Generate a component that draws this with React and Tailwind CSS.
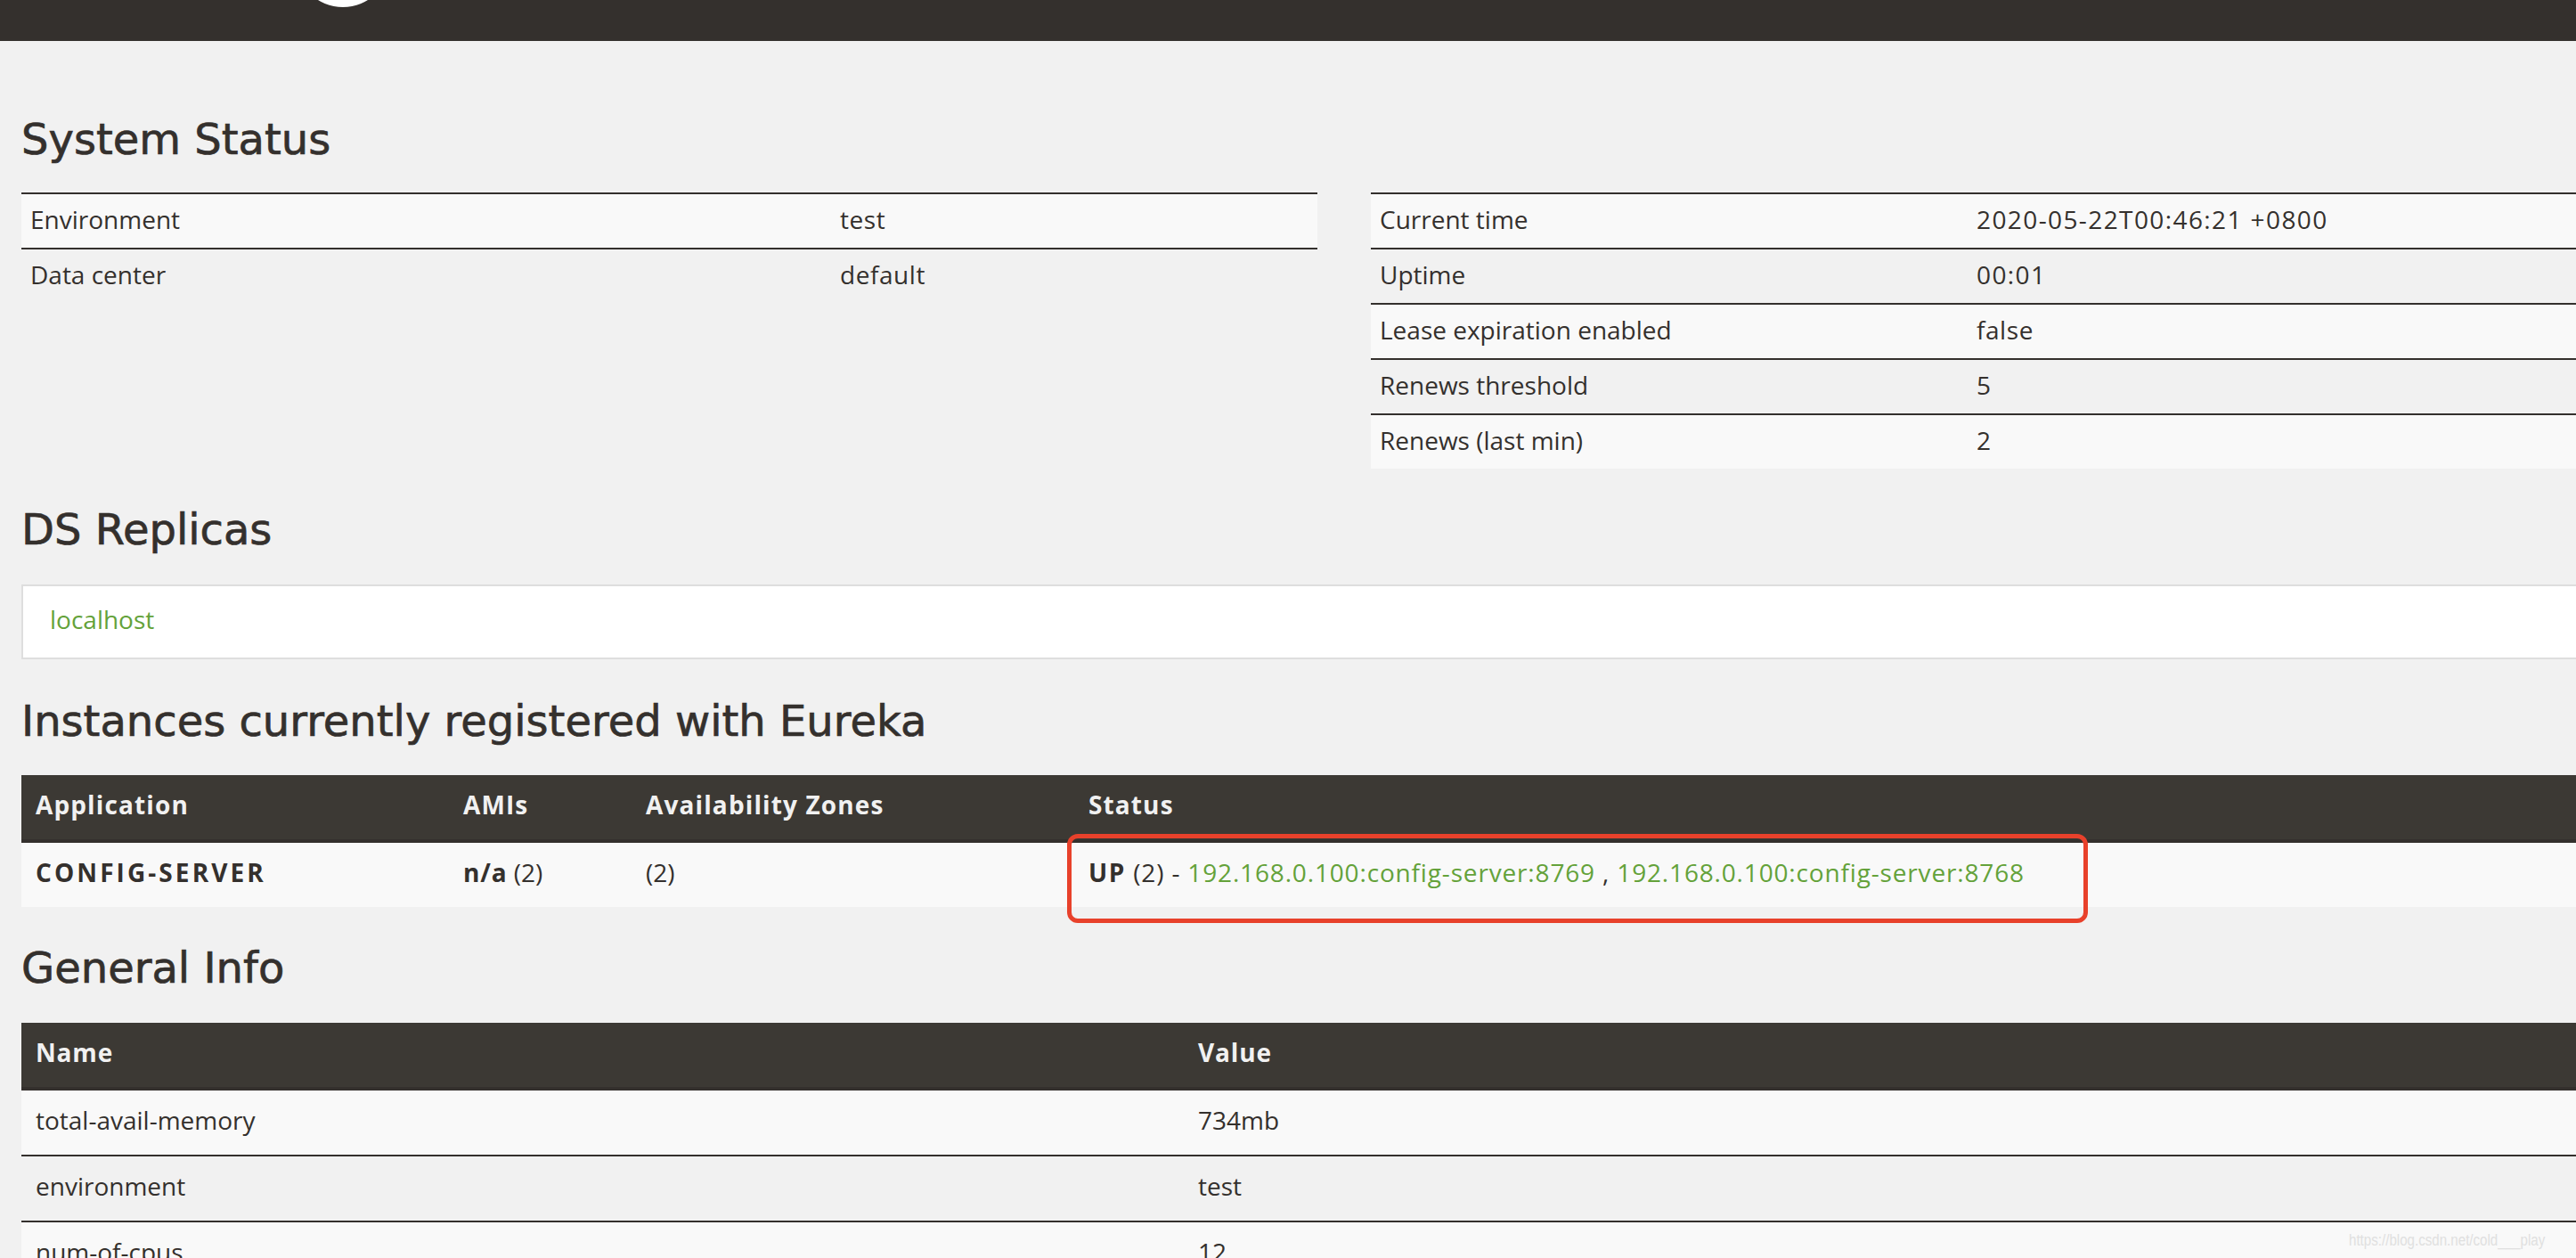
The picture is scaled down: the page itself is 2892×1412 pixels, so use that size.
const systemLeft = [
  ["Environment", "test"],
  ["Data center", "default"],
];

const systemRight = [
  ["Current time", "2020-05-22T00:46:21 +0800"],
  ["Uptime", "00:01"],
  ["Lease expiration enabled", "false"],
  ["Renews threshold", "5"],
  ["Renews (last min)", "2"],
];

const general = [
  ["total-avail-memory", "734mb"],
  ["environment", "test"],
  ["num-of-cpus", "12"],
];

function Heading({ children, className }) {
  return (
    <h2
      className={
        "font-['DejaVu_Sans',sans-serif] text-[48px] leading-[52px] text-[#34302d] [-webkit-text-stroke:0.7px_#34302d] " +
        className
      }
    >
      {children}
    </h2>
  );
}

function StatusTable({ rows, labelWidth }) {
  return (
    <div className="w-[1455px]">
      {rows.map(([label, value], i) => (
        <div
          key={label}
          className={
            "flex h-[62px] border-t-2 border-[#34302d] " +
            (i % 2 === 0 ? "bg-[#f9f9f9]" : "")
          }
        >
          <div className="px-[10px] pt-[8px]" style={{ width: labelWidth }}>
            {label}
          </div>
          <div
            className={
              "px-[10px] pt-[8px] " +
              (/\d/.test(value) ? "tracking-[0.05em]" : "tracking-[0.02em]")
            }
          >
            {value}
          </div>
        </div>
      ))}
    </div>
  );
}

export default function App() {
  return (
    <div className="relative w-[2892px] h-[1412px] overflow-hidden bg-[#f1f1f1] text-[#34302d] font-['Open_Sans',sans-serif] font-medium text-[28px] leading-[40px]">
      <nav className="relative h-[46px] bg-[#34302d] overflow-hidden">
        <div className="absolute left-[332px] top-[-98px] w-[106px] h-[106px] rounded-full bg-white" />
      </nav>

      <main className="w-[3018px] px-[24px]">
        <Heading className="mt-[84px] mb-[34px]">System Status</Heading>
        <div className="flex gap-[60px]">
          <StatusTable rows={systemLeft} labelWidth={909} />
          <StatusTable rows={systemRight} labelWidth={670} />
        </div>

        <Heading className="mt-[42px] mb-[36px]">DS Replicas</Heading>
        <div className="h-[84px] border-2 border-[#dedede] bg-white px-[30px] pt-[17px]">
          <a className="text-[#64a23a]">localhost</a>
        </div>

        <Heading className="mt-[43px] mb-[35px]">
          Instances currently registered with Eureka
        </Heading>
        <div className="w-[2970px]">
          <div className="flex h-[76px] bg-[#3c3934] border-b-4 border-[#34302d] text-[#f1f1f1] font-bold tracking-[0.04em]">
            <div className="w-[480px] px-[16px] pt-[13px]">Application</div>
            <div className="w-[205px] px-[16px] pt-[13px]">AMIs</div>
            <div className="w-[497px] px-[16px] pt-[13px]">Availability Zones</div>
            <div className="px-[16px] pt-[13px]">Status</div>
          </div>
          <div className="flex h-[72px] bg-[#f9f9f9]">
            <div className="w-[480px] px-[16px] pt-[13px] font-bold tracking-[0.11em]">
              CONFIG-SERVER
            </div>
            <div className="w-[205px] px-[16px] pt-[13px]">
              <b className="tracking-[0.03em]">n/a</b> (2)
            </div>
            <div className="w-[497px] px-[16px] pt-[13px]">(2)</div>
            <div className="relative px-[16px] pt-[13px] tracking-[0.03em]">
              <b className="tracking-[0.06em]">UP</b> (2) -{" "}
              <a className="text-[#64a23a]">192.168.0.100:config-server:8769</a> ,{" "}
              <a className="text-[#64a23a]">192.168.0.100:config-server:8768</a>
              <div className="absolute left-[-8px] top-[-10px] w-[1146px] h-[100px] rounded-[12px] border-[5px] border-[#e8412b]" />
            </div>
          </div>
        </div>

        <Heading className="mt-[42px] mb-[36px]">General Info</Heading>
        <div className="w-[2970px]">
          <div className="flex h-[76px] bg-[#3c3934] border-b-4 border-[#34302d] text-[#f1f1f1] font-bold tracking-[0.03em]">
            <div className="w-[1305px] px-[16px] pt-[13px]">Name</div>
            <div className="px-[16px] pt-[13px]">Value</div>
          </div>
          {general.map(([name, value], i) => (
            <div
              key={name}
              className={
                "flex " +
                (i === 0 ? "h-[72px] " : "h-[74px] border-t-2 border-[#34302d] ") +
                (i % 2 === 0 ? "bg-[#f9f9f9]" : "")
              }
            >
              <div className="w-[1305px] px-[16px] pt-[13px]">{name}</div>
              <div className="px-[16px] pt-[13px]">{value}</div>
            </div>
          ))}
        </div>
      </main>

      <div className="absolute left-[2637px] top-[1380px] origin-left scale-x-[0.84] font-['Liberation_Sans',sans-serif] font-normal text-[18px] leading-[24px] text-[#e0e0e0] whitespace-nowrap">
        https://blog.csdn.net/cold___play
      </div>
    </div>
  );
}
